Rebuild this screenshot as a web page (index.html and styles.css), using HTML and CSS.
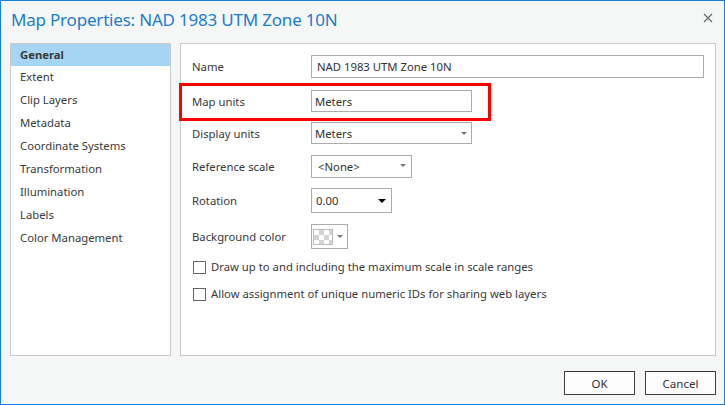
FILE: index.html
```html
<!DOCTYPE html>
<html>
<head>
<meta charset="utf-8">
<link rel="stylesheet" href="styles.css">
</head>
<body>
<div class="window">
  <div class="titlebar">
    <div class="title">Map Properties: NAD 1983 UTM Zone 10N</div>
    <svg class="close" width="10" height="10" viewBox="0 0 10 10"><path d="M1 1L9 9M9 1L1 9" stroke="#6a6a6a" stroke-width="1.2"/></svg>
  </div>
  <div class="content">
    <ul class="sidebar">
      <li class="item selected">General</li>
      <li class="item">Extent</li>
      <li class="item">Clip Layers</li>
      <li class="item">Metadata</li>
      <li class="item">Coordinate Systems</li>
      <li class="item">Transformation</li>
      <li class="item">Illumination</li>
      <li class="item">Labels</li>
      <li class="item">Color Management</li>
    </ul>
    <div class="panel">
      <div class="row r1"><span class="label">Name</span><div class="field wide">NAD 1983 UTM Zone 10N</div></div>
      <div class="row r2"><span class="label">Map units</span><div class="field units">Meters</div></div>
      <div class="row r3"><span class="label">Display units</span><div class="field units select">Meters<span class="arrow small"></span></div></div>
      <div class="row r4"><span class="label">Reference scale</span><div class="field ref select">&lt;None&gt;<span class="arrow small"></span></div></div>
      <div class="row r5"><span class="label">Rotation</span><div class="field rot select">0.00<span class="arrow big"></span></div></div>
      <div class="row r6"><span class="label">Background color</span><div class="field color"><span class="checker"></span><span class="arrow small"></span></div></div>
      <div class="row r7"><span class="checkbox"></span><span class="cbtext">Draw up to and including the maximum scale in scale ranges</span></div>
      <div class="row r8"><span class="checkbox"></span><span class="cbtext">Allow assignment of unique numeric IDs for sharing web layers</span></div>
      <div class="highlight"></div>
    </div>
  </div>
  <div class="footer">
    <button class="btn">OK</button>
    <button class="btn">Cancel</button>
  </div>
</div>
</body>
</html>
```
FILE: styles.css
```css
* { box-sizing: border-box; }
html, body { margin: 0; padding: 0; }
body { width: 725px; height: 405px; overflow: hidden; font-family: "Noto Sans", "Open Sans", sans-serif; font-size: 11.3px; color: #3a3a3a; }
.window { width: 725px; height: 405px; border: 1px solid #1a7fd4; background: #f5f7f7; display: flex; flex-direction: column; }
.titlebar { height: 42px; display: flex; align-items: center; justify-content: space-between; padding: 0 11px 0 10px; }
.title { color: #1d7ccb; font-size: 17px; letter-spacing: -0.2px; margin-top: -6px; }
.close { margin-top: -8px; }
.content { height: 313px; display: flex; padding: 0 8px 0 9px; gap: 9px; }
.sidebar { list-style: none; margin: 0; padding: 0; width: 161px; border: 1px solid #cacaca; background: #fff; }
.item { height: 23px; line-height: 22px; padding-left: 9px; }
.item.selected { background: #a5d5f3; font-weight: bold; height: 22px; line-height: 21px; }
.panel { flex: 1; border: 1px solid #cacaca; background: #fff; position: relative; padding: 11px 0 0 11px; }
.row { display: flex; align-items: center; }
.label { width: 119px; flex: none; }
.field { border: 1px solid #acacac; height: 100%; display: flex; align-items: center; padding-left: 5px; position: relative; color: #333; }
.r1 { height: 23px; }
.r2 { height: 22px; margin-top: 12px; }
.r3 { height: 22px; margin-top: 10px; }
.r4 { height: 23px; margin-top: 11px; }
.r5 { height: 25px; margin-top: 10px; }
.r6 { height: 25px; margin-top: 11px; }
.r7 { height: 13px; margin-top: 12px; }
.r8 { height: 13px; margin-top: 14px; }
.wide { width: 393px; }
.units { width: 161px; padding-left: 3px; }
.ref { width: 101px; padding-left: 6px; }
.rot { width: 81px; padding-left: 4px; }
.color { width: 37px; padding-left: 1px; }
.arrow { position: absolute; width: 0; height: 0; border-left: 3px solid transparent; border-right: 3px solid transparent; }
.arrow.small { border-top: 3px solid #777; right: 5px; top: 8px; }
.units .arrow.small { right: 4px; top: 9px; }
.arrow.big { border-left-width: 4px; border-right-width: 4px; border-top: 4px solid #000; right: 5px; top: 10px; }
.color .arrow.small { right: 4px; top: 10px; }
.checker { width: 20px; height: 16px; background-color: #fff; background-image: linear-gradient(45deg, #d4d4d4 25%, transparent 25%, transparent 75%, #d4d4d4 75%), linear-gradient(45deg, #d4d4d4 25%, transparent 25%, transparent 75%, #d4d4d4 75%); background-size: 10px 10px; background-position: 0 0, 5px 5px; border: 1px solid #bbb; }
.checkbox { width: 13px; height: 13px; border: 1px solid #666; background: #fff; flex: none; margin-left: 1px; }
.cbtext { margin-left: 5px; margin-top: -2px; }
.highlight { position: absolute; left: -2px; top: 39px; width: 312px; height: 38px; border: 3px solid #ff0000; }
.footer { flex: 1; display: flex; justify-content: flex-end; align-items: flex-start; padding: 15px 8px 0 0; gap: 10px; }
.btn { width: 71px; height: 24px; border: 1px solid #3c3c3c; background: #fdfdfd; font-family: inherit; font-size: 11.5px; color: #333; padding: 0; }
```
